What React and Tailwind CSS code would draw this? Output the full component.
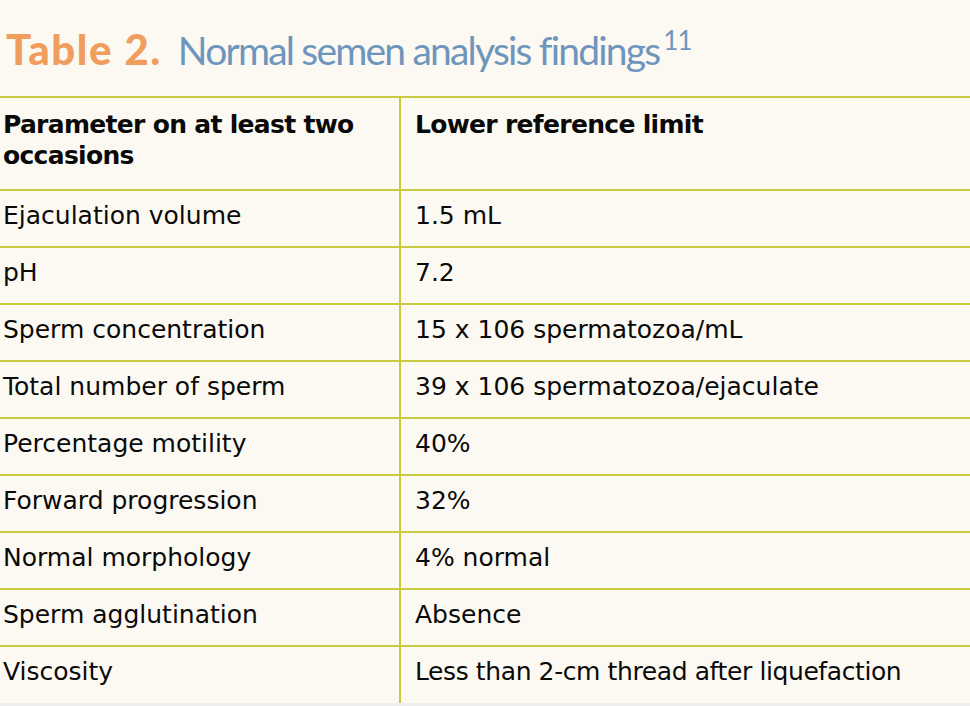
const rows = [
  ['Ejaculation volume', '1.5 mL'],
  ['pH', '7.2'],
  ['Sperm concentration', '15 x 106 spermatozoa/mL'],
  ['Total number of sperm', '39 x 106 spermatozoa/ejaculate'],
  ['Percentage motility', '40%'],
  ['Forward progression', '32%'],
  ['Normal morphology', '4% normal'],
  ['Sperm agglutination', 'Absence'],
];

export default function App() {
  return (
    <div className="w-[970px] h-[706px] overflow-hidden bg-[#eeeeec] font-['DejaVu_Sans',sans-serif]">
      <div className="h-[703px] bg-[#fcf9f2] flex flex-col">
        {/* title */}
        <div className="h-[96px] pl-[6px] pt-[28px] font-['Lato',sans-serif] leading-none whitespace-nowrap flex items-baseline">
          <span className="font-black text-[#f09d5d] text-[42px] tracking-[1.5px]">Table 2.</span>
          <span className="ml-[16px] text-[#6e96bd] text-[39px] tracking-[-1.8px]">Normal semen analysis findings</span>
          <span className="ml-[4px] self-start -mt-[1px] text-[#6e96bd] text-[26px] tracking-[-1px]">11</span>
        </div>

        {/* table */}
        <div className="flex-1 flex flex-col border-t-2 border-[#c8c93c] text-[#0a0a0a] text-[25px]">
          <div className="h-[93px] flex border-b-2 border-[#c8c93c] font-bold leading-[31px] tracking-[-0.7px]">
            <div className="w-[401px] border-r-2 border-[#c8c93c] pl-[3px] pt-[11px] pr-4">
              Parameter on at least two occasions
            </div>
            <div className="flex-1 pl-[14px] pt-[11px]">Lower reference limit</div>
          </div>
          {rows.map(([a, b]) => (
            <div key={a} className="h-[57px] flex border-b-2 border-[#c8c93c] leading-[30px]">
              <div className="w-[401px] border-r-2 border-[#c8c93c] pl-[3px] pt-[10px]">{a}</div>
              <div className="flex-1 pl-[14px] pt-[10px]">{b}</div>
            </div>
          ))}
          <div className="flex-1 flex leading-[30px]">
            <div className="w-[401px] border-r-2 border-[#c8c93c] pl-[3px] pt-[10px]">Viscosity</div>
            <div className="flex-1 pl-[14px] pt-[10px] tracking-[-0.4px]">Less than 2-cm thread after liquefaction</div>
          </div>
        </div>
      </div>
    </div>
  );
}
